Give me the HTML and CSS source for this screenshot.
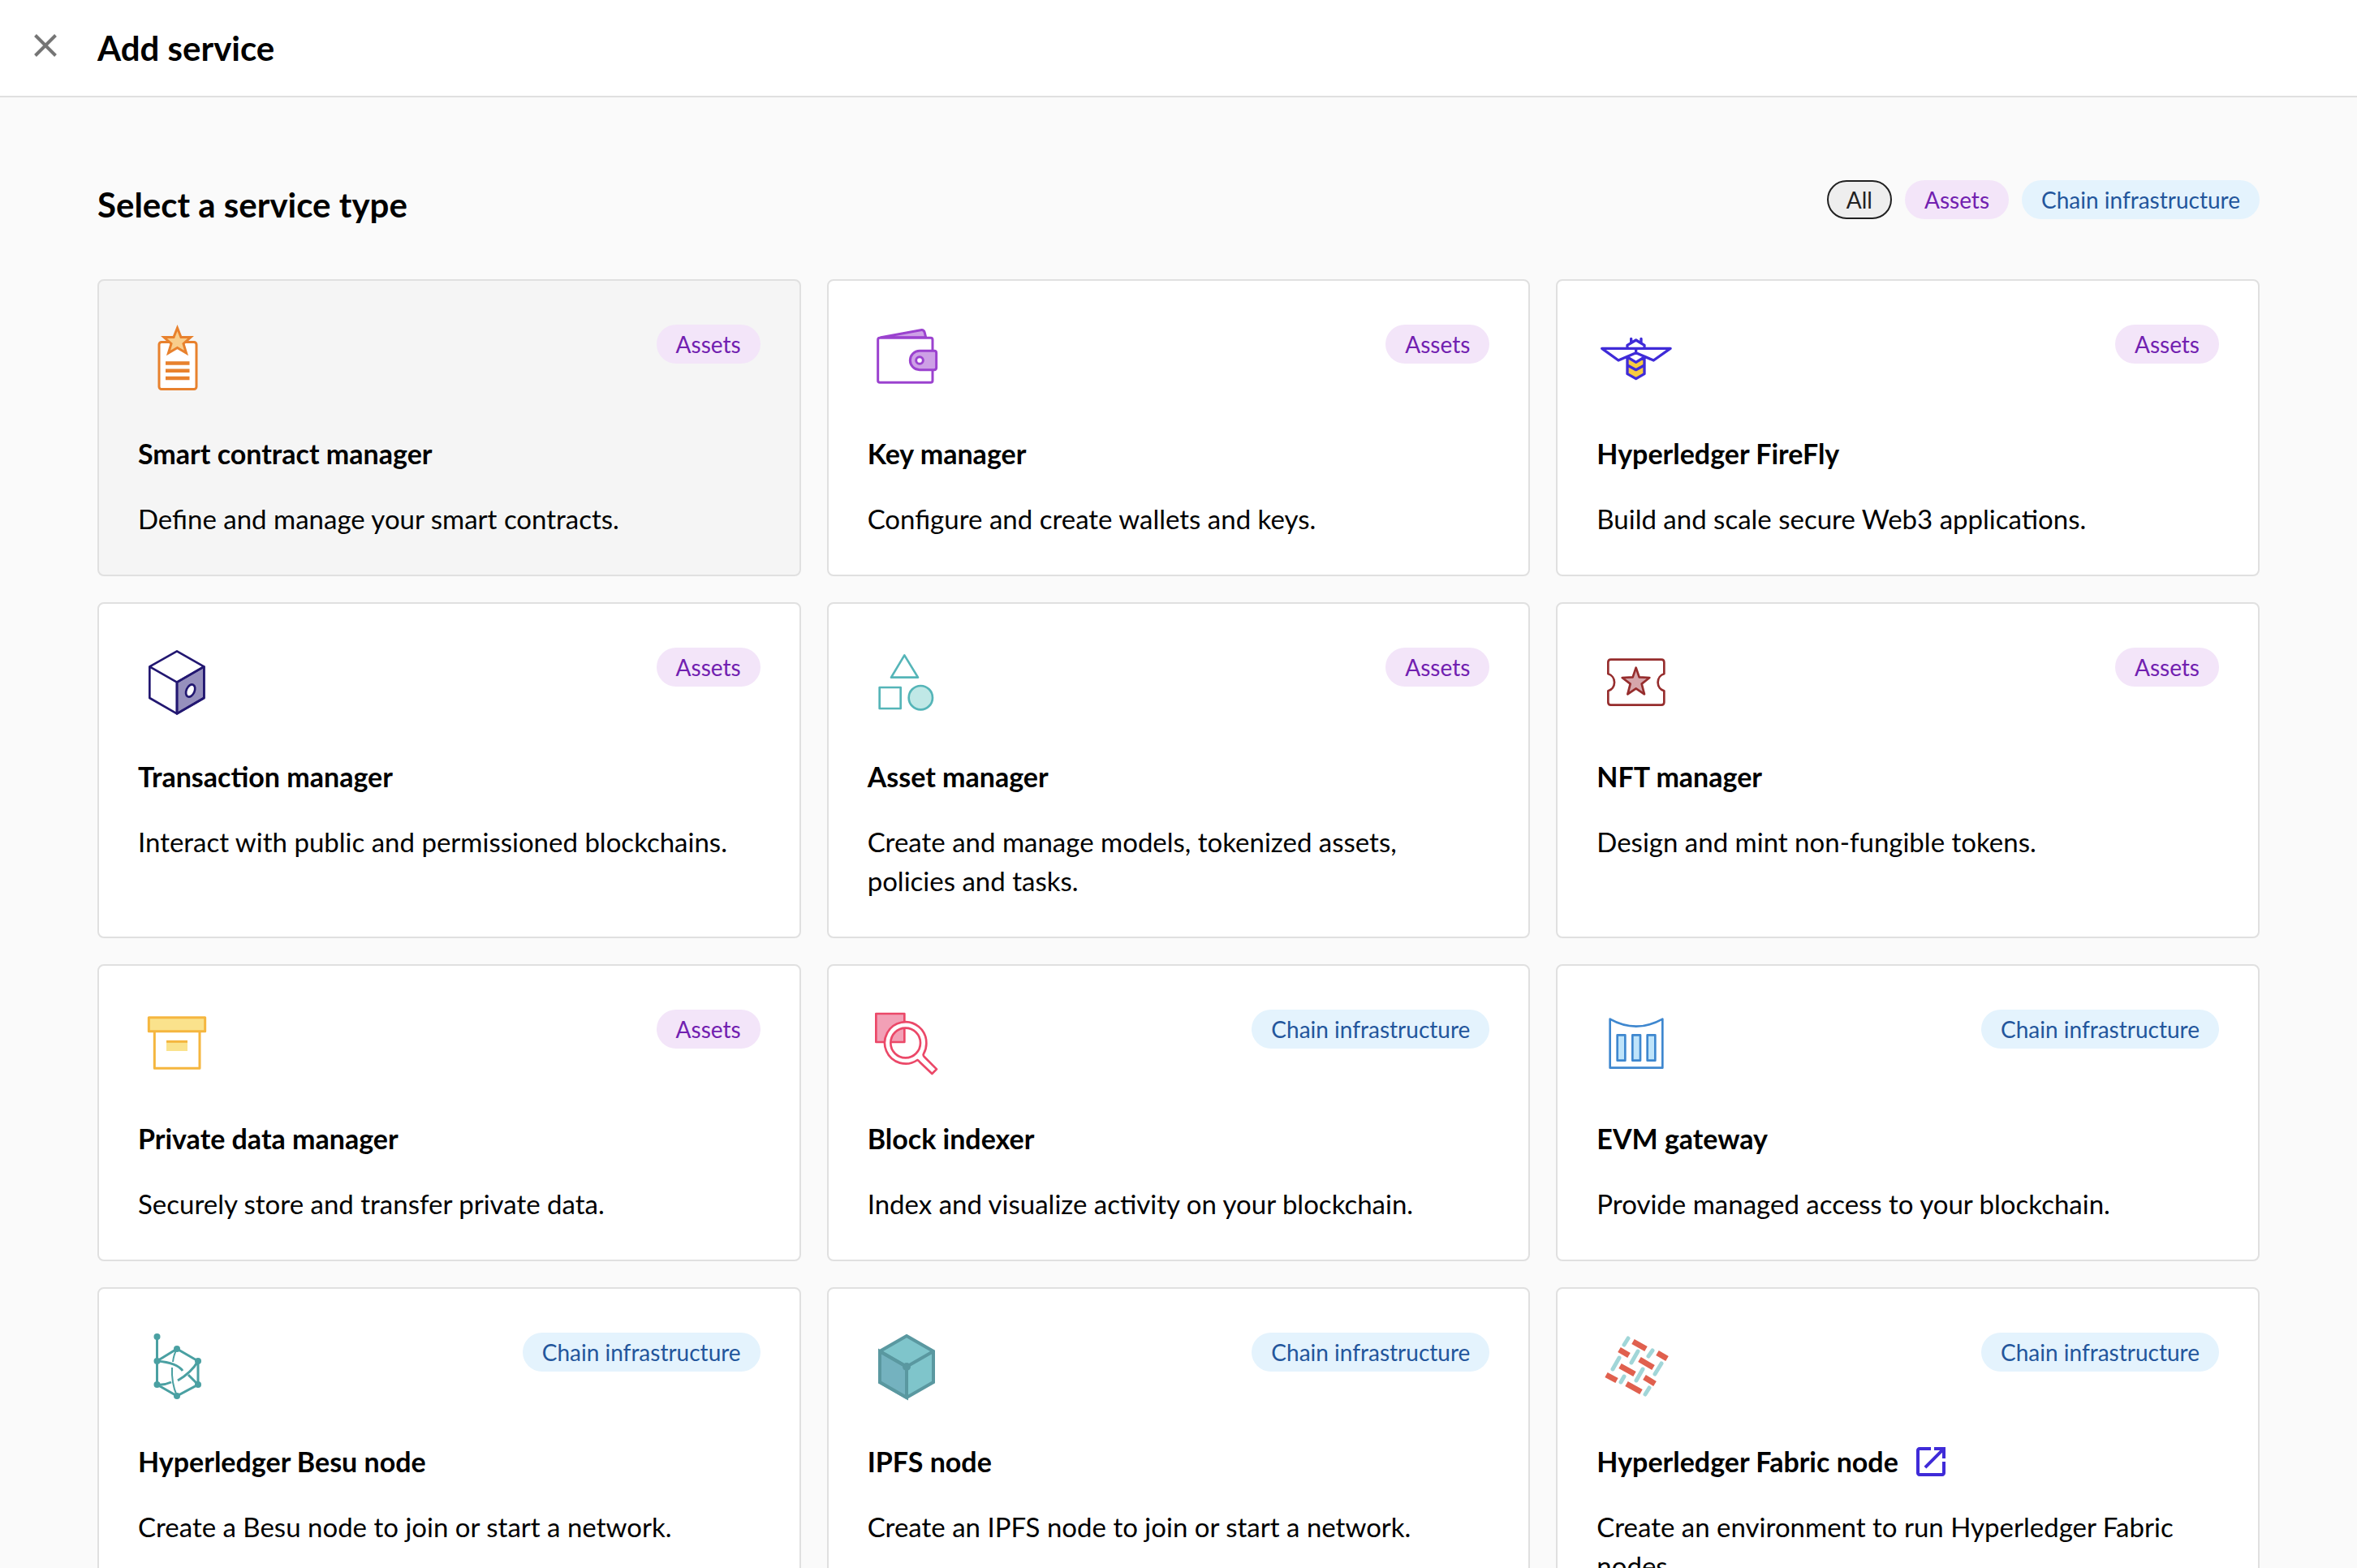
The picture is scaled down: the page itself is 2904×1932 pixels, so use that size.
FILE: index.html
```html
<!DOCTYPE html>
<html lang="en">
<head>
<meta charset="utf-8">
<meta name="viewport" content="width=device-width, initial-scale=1">
<title>Add service</title>
<link rel="stylesheet" href="styles.css">
</head>
<body>
<header class="topbar">
  <button class="close" type="button" aria-label="Close">
    <svg viewBox="0 0 28 28" fill="none" stroke="#757575" stroke-width="4"><path d="M1.500 1.500 26.500 26.500M26.500 1.500 1.500 26.500"/></svg>
  </button>
  <h1 class="heading">Add service</h1>
</header>
<main class="content">
  <div class="intro">
    <h2 class="heading">Select a service type</h2>
    <div class="filters">
      <button class="chip chip-all" type="button">All</button>
      <button class="chip chip-assets" type="button">Assets</button>
      <button class="chip chip-chain" type="button">Chain infrastructure</button>
    </div>
  </div>
  <div class="grid">
    <a class="card card-active" href="#smart-contract">
      <div class="card-top">
        <svg class="icon" viewBox="0 0 96 96" fill="none" stroke="#e8812d" stroke-width="3"><rect x="26" y="27.500" width="46" height="58" rx="3" fill="#fff"/><path d="M48.500 10 53 21.500H65L56 29.500 59.500 41 48.500 34.500 37.500 41 41 29.500 32 21.500H44Z" fill="#f8cd8b"/><path stroke-width="4.500" d="M34 53.500H63.500M34 62.700H63.500M34 72H63.500"/></svg>
        <span class="chip chip-assets">Assets</span>
      </div>
      <h3 class="title">Smart contract manager</h3>
      <p class="text">Define and manage your smart contracts.</p>
    </a>
    <a class="card" href="#key">
      <div class="card-top">
        <svg class="icon" viewBox="26 42 288 288" fill="none" stroke="#9b42cf" stroke-width="9" stroke-linejoin="round"><path d="M75 107 222 80Q234 78 237 90L241 107Z" fill="#cda0e6"/><rect x="64" y="109" width="202" height="165" rx="7" fill="#fff"/><path d="M218 157H272Q280 157 280 165V219Q280 227 272 227H218A35 35 0 0 1 218 157Z" fill="#cda0e6"/><circle cx="218" cy="192" r="13" fill="#fff"/></svg>
        <span class="chip chip-assets">Assets</span>
      </div>
      <h3 class="title">Key manager</h3>
      <p class="text">Configure and create wallets and keys.</p>
    </a>
    <a class="card" href="#firefly">
      <div class="card-top">
        <svg class="icon" viewBox="37 42 288 288" fill="none" stroke="#3f2bd8" stroke-width="10" stroke-linejoin="round" stroke-linecap="round"><path d="M151 186 183 203 214 186V242L183 260 151 242Z" fill="#f6cb3f" stroke="none"/><path d="M183 148H57L118 192 183 164 248 192 310 148H183V164M151 144V136L183 117 214 136V144M165 112V125M202 112V125M151 180V242L183 260 214 242V180M151 180 183 199 214 180M151 210 183 227 214 210"/></svg>
        <span class="chip chip-assets">Assets</span>
      </div>
      <h3 class="title">Hyperledger FireFly</h3>
      <p class="text">Build and scale secure Web3 applications.</p>
    </a>
    <a class="card" href="#transaction">
      <div class="card-top">
        <svg class="icon" viewBox="30 36 288 288" fill="none" stroke="#221771" stroke-width="8" stroke-linejoin="round"><path d="M174 182 274 124V240L174 298Z" fill="#9690bd"/><path d="M174 67 274 124V240L174 298 73 240V124ZM73 124 174 182 274 124M174 182V298"/><ellipse cx="224" cy="213" rx="15" ry="24" transform="rotate(24 224 213)" fill="#fff"/></svg>
        <span class="chip chip-assets">Assets</span>
      </div>
      <h3 class="title">Transaction manager</h3>
      <p class="text">Interact with public and permissioned blockchains.</p>
    </a>
    <a class="card" href="#asset">
      <div class="card-top">
        <svg class="icon" viewBox="26 36 288 288" fill="none" stroke="#55b5b8" stroke-width="8" stroke-linejoin="round"><path d="M162 82 212 164H113ZM70 201H148V279H70Z"/><circle cx="222" cy="239" r="44" fill="#c0e8e6"/></svg>
        <span class="chip chip-assets">Assets</span>
      </div>
      <h3 class="title">Asset manager</h3>
      <p class="text">Create and manage models, tokenized assets, policies and tasks.</p>
    </a>
    <a class="card" href="#nft">
      <div class="card-top">
        <svg class="icon" viewBox="37 36 288 288" fill="none" stroke="#962d2d" stroke-width="8" stroke-linejoin="round"><path d="M90 98H277Q287 98 287 108V151A33 33 0 0 0 287 214V256Q287 266 277 266H90Q80 266 80 256V214A33 33 0 0 0 80 151V108Q80 98 90 98Z"/><path d="M183 128 195 163 233 165 204 188 214 226 183 205 152 226 162 188 132 165 171 163Z" fill="#d6a6ab"/></svg>
        <span class="chip chip-assets">Assets</span>
      </div>
      <h3 class="title">NFT manager</h3>
      <p class="text">Design and mint non-fungible tokens.</p>
    </a>
    <a class="card" href="#private-data">
      <div class="card-top">
        <svg class="icon" viewBox="30 24 288 288" fill="none" stroke="#f5b63f" stroke-width="9" stroke-linejoin="round"><path d="M91 126V259H258V126"/><path d="M70 71H278V122H70Z" fill="#fae28c"/><path d="M135 160H213V195H135Z" fill="#fae28c" stroke="none"/><path d="M135 160H213"/></svg>
        <span class="chip chip-assets">Assets</span>
      </div>
      <h3 class="title">Private data manager</h3>
      <p class="text">Securely store and transfer private data.</p>
    </a>
    <a class="card" href="#indexer">
      <div class="card-top">
        <svg class="icon" viewBox="26 24 288 288" fill="none" stroke="#eb4868" stroke-width="8" stroke-linejoin="round"><path d="M57 57H162V162H57Z" fill="#f2a0b6"/><path d="M243 165A77 77 0 1 0 210 228Q214 230 219 236L264 279 281 262 235 216Q230 211 233 205A77 77 0 0 0 243 165ZM221 165A55 55 0 1 1 111 165 55 55 0 1 1 221 165Z" fill="#fff" fill-rule="evenodd"/></svg>
        <span class="chip chip-chain">Chain infrastructure</span>
      </div>
      <h3 class="title">Block indexer</h3>
      <p class="text">Index and visualize activity on your blockchain.</p>
    </a>
    <a class="card" href="#evm">
      <div class="card-top">
        <svg class="icon" viewBox="37 24 288 288" fill="none" stroke="#3e87cf" stroke-width="8" stroke-linejoin="round"><path d="M87 77Q183 131 281 77V257H87Z"/><path d="M114 136H143V230H114ZM170 136H199V230H170ZM225 136H254V230H225Z" fill="#bfe4fa"/></svg>
        <span class="chip chip-chain">Chain infrastructure</span>
      </div>
      <h3 class="title">EVM gateway</h3>
      <p class="text">Provide managed access to your blockchain.</p>
    </a>
    <a class="card" href="#besu">
      <div class="card-top">
        <svg class="icon" viewBox="0 0 96 96" fill="none" stroke="#4aa0a2" stroke-width="3"><path d="M23.500 11V70L48 84 74 70V41L48 26 23.500 41M23.500 41Q48 43 55 53M62 58 74 70M74 41Q66 55 49 65M41 67Q32 71 23.500 70"/><path stroke-width="2" d="M48 26Q44 33 43 42M42 49Q41 68 48 84"/><g fill="#4aa0a2" stroke="none"><circle cx="23.500" cy="11" r="4"/><circle cx="23.500" cy="41" r="4"/><circle cx="23.500" cy="70" r="4"/><circle cx="48" cy="26" r="4"/><circle cx="48" cy="84" r="4"/><circle cx="74" cy="41" r="4"/><circle cx="74" cy="70" r="4"/></g></svg>
        <span class="chip chip-chain">Chain infrastructure</span>
      </div>
      <h3 class="title">Hyperledger Besu node</h3>
      <p class="text">Create a Besu node to join or start a network.</p>
    </a>
    <a class="card" href="#ipfs">
      <div class="card-top">
        <svg class="icon" viewBox="0 0 96 96" stroke="#5a98a0" stroke-width="4"><path d="M48 10 81 29V67L48 86 15 67V29Z" fill="#7fc5cb"/><path d="M15 29 48 48V86L15 67Z" fill="#74b2bf"/><path d="M15 29 48 48 81 29M48 48V86" fill="none"/><circle cx="48" cy="48" r="5" fill="#5a98a0" stroke="none"/></svg>
        <span class="chip chip-chain">Chain infrastructure</span>
      </div>
      <h3 class="title">IPFS node</h3>
      <p class="text">Create an IPFS node to join or start a network.</p>
    </a>
    <a class="card" href="#fabric">
      <div class="card-top">
        <svg class="icon" viewBox="0 0 96 96" fill="none"><path stroke="#e0604e" stroke-width="7" d="M45 17 61 26M28 27 40 34M75 31 87 38M53 39 70 49M29 47 47 57M12 58 25 65M59 61 72 69M37 69 55 79"/><path stroke="#a1d6d8" stroke-width="5" stroke-linecap="round" d="M34 21 39 13M20 51 28 37M43 43 51 29M64 35 69 28M72 57 80 44M49 65 57 51M30 67 34 60M60 82 65 74"/></svg>
        <span class="chip chip-chain">Chain infrastructure</span>
      </div>
      <h3 class="title">Hyperledger Fabric node
        <svg class="external" viewBox="0 0 24 24" fill="#3f2bd8"><path d="M19 19H5V5h7V3H5c-1.110 0-2 .9-2 2v14c0 1.100.89 2 2 2h14c1.100 0 2-.9 2-2v-7h-2v7zM14 3v2h3.590l-9.830 9.830 1.410 1.410L19 6.410V10h2V3h-7z"/></svg>
      </h3>
      <p class="text">Create an environment to run Hyperledger Fabric nodes.</p>
    </a>
  </div>
</main>
</body>
</html>
```
FILE: styles.css
```css
* {
  box-sizing: border-box;
}

body {
  margin: 0;
  height: 100vh;
  display: flex;
  flex-direction: column;
  background: #fafafa;
  color: #000;
  font-family: Lato, "Liberation Sans", sans-serif;
  font-size: 33px;
  line-height: 48px;
}

h1, h2, h3, p {
  margin: 0;
}

button {
  font: inherit;
  border: 0;
  padding: 0;
  cursor: pointer;
}

.topbar {
  flex: none;
  display: flex;
  align-items: center;
  gap: 50px;
  height: 120px;
  padding: 0 42px;
  background: #fff;
  border-bottom: 2px solid #e0e0e0;
}

.close {
  width: 28px;
  height: 28px;
  margin-bottom: 6px;
  background: none;
}

.close svg {
  display: block;
}

.heading {
  font-size: 42px;
  font-weight: 700;
  line-height: 60px;
}

.content {
  flex: 1;
  min-height: 0;
  overflow-y: auto;
  scrollbar-width: none;
  padding: 102px 120px 120px;
}

.intro {
  display: flex;
  justify-content: space-between;
  align-items: flex-start;
  margin-bottom: 62px;
}

.filters {
  display: flex;
  gap: 16px;
}

.chip {
  height: 48px;
  padding: 0 24px;
  border-radius: 24px;
  font-size: 28px;
  line-height: 48px;
  white-space: nowrap;
}

.chip-all {
  background: #eee;
  color: #212121;
  border: 2px solid #212121;
  padding: 0 22px;
  line-height: 44px;
}

.chip-assets {
  background: #f3e5f9;
  color: #7120b0;
}

.chip-chain {
  background: #e4f3fd;
  color: #23569c;
}

.grid {
  display: grid;
  grid-template-columns: repeat(3, minmax(0, 1fr));
  gap: 32px;
}

.card {
  padding: 48px 48px 45px;
  background: #fff;
  border: 2px solid #e0e0e0;
  border-radius: 8px;
  color: inherit;
  text-decoration: none;
}

.card-active {
  background: #f5f5f5;
}

.card-top {
  display: flex;
  justify-content: space-between;
  align-items: flex-start;
}

.card-top .chip {
  margin-top: 6px;
}

.icon {
  width: 96px;
  height: 96px;
}

.title {
  display: flex;
  align-items: center;
  gap: 16px;
  margin: 45px 0 32px;
  font-size: 34px;
  font-weight: 700;
}

.external {
  width: 48px;
  height: 48px;
}
```
